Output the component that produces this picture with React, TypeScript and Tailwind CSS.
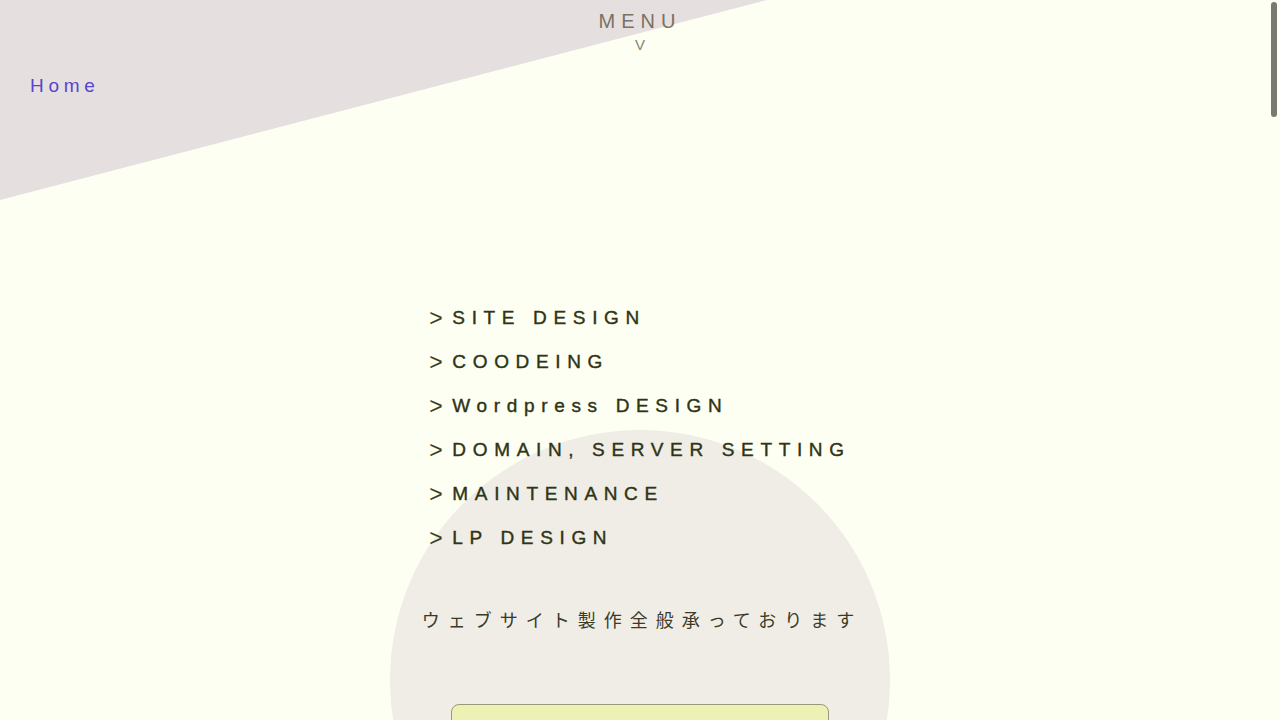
import type { ReactNode } from 'react'

const SERVICES = [
  'SITE DESIGN',
  'COODEING',
  'Wordpress DESIGN',
  'DOMAIN, SERVER SETTING',
  'MAINTENANCE',
  'LP DESIGN',
]

const font = 'font-["Liberation_Sans","Noto_Sans_CJK_JP",sans-serif]'

function ServiceItem({ children }: { children: ReactNode }) {
  return (
    <li className="flex h-[44px] items-center">
      <span className="w-[23px] text-[23px] leading-none text-[#3b3f25]">&gt;</span>
      <span className="text-[19px] tracking-[0.35em] text-[#2e3414] [-webkit-text-stroke:0.4px_#2e3414]">
        {children}
      </span>
    </li>
  )
}

export default function App() {
  return (
    <div className={`relative h-screen overflow-y-auto bg-[#fefff3] ${font}`}>
      {/* overlay scroll thumb, as in the capture */}
      <div className="fixed top-[2px] right-[3px] z-10 h-[115px] w-[6px] rounded-full bg-[#777a72]" />

      <header className="relative h-[200px]">
        <div className="absolute inset-0 bg-[#e6dfdf] [clip-path:polygon(0_0,767px_0,0_100%)]" />
        <div className="relative flex flex-col items-center pt-[8px]">
          <button className="text-[20px] leading-[26px] tracking-[0.3em] text-[#7a7262]">MENU</button>
          <span className="mt-[1px] text-[15px] leading-[20px] text-[#8a8478]">V</span>
        </div>
        <a href="#" className="relative mt-[17px] ml-[30px] inline-block text-[19px] tracking-[0.25em] text-[#5646cf]">
          Home
        </a>
      </header>

      <main className="relative min-h-[4280px]">
        <div className="absolute top-[230px] left-1/2 h-[500px] w-[500px] -translate-x-1/2 rounded-full bg-[#f0ede7]" />

        <section className="relative flex flex-col items-center pt-[96px]">
          <ul>
            {SERVICES.map((s) => (
              <ServiceItem key={s}>{s}</ServiceItem>
            ))}
          </ul>

          <p className="mt-[48px] pl-[4px] text-[18px] tracking-[8px] text-[#3a3a26]">
            ウェブサイト製作全般承っております
          </p>

          <a
            href="#"
            className="mt-[69px] flex h-[64px] w-[378px] items-center justify-center rounded-[8px] border border-[#9a9878] bg-[#eef1b4] text-[18px] tracking-[0.3em] text-[#343a1b]"
          >
            CONTACT
          </a>
        </section>
      </main>
    </div>
  )
}
